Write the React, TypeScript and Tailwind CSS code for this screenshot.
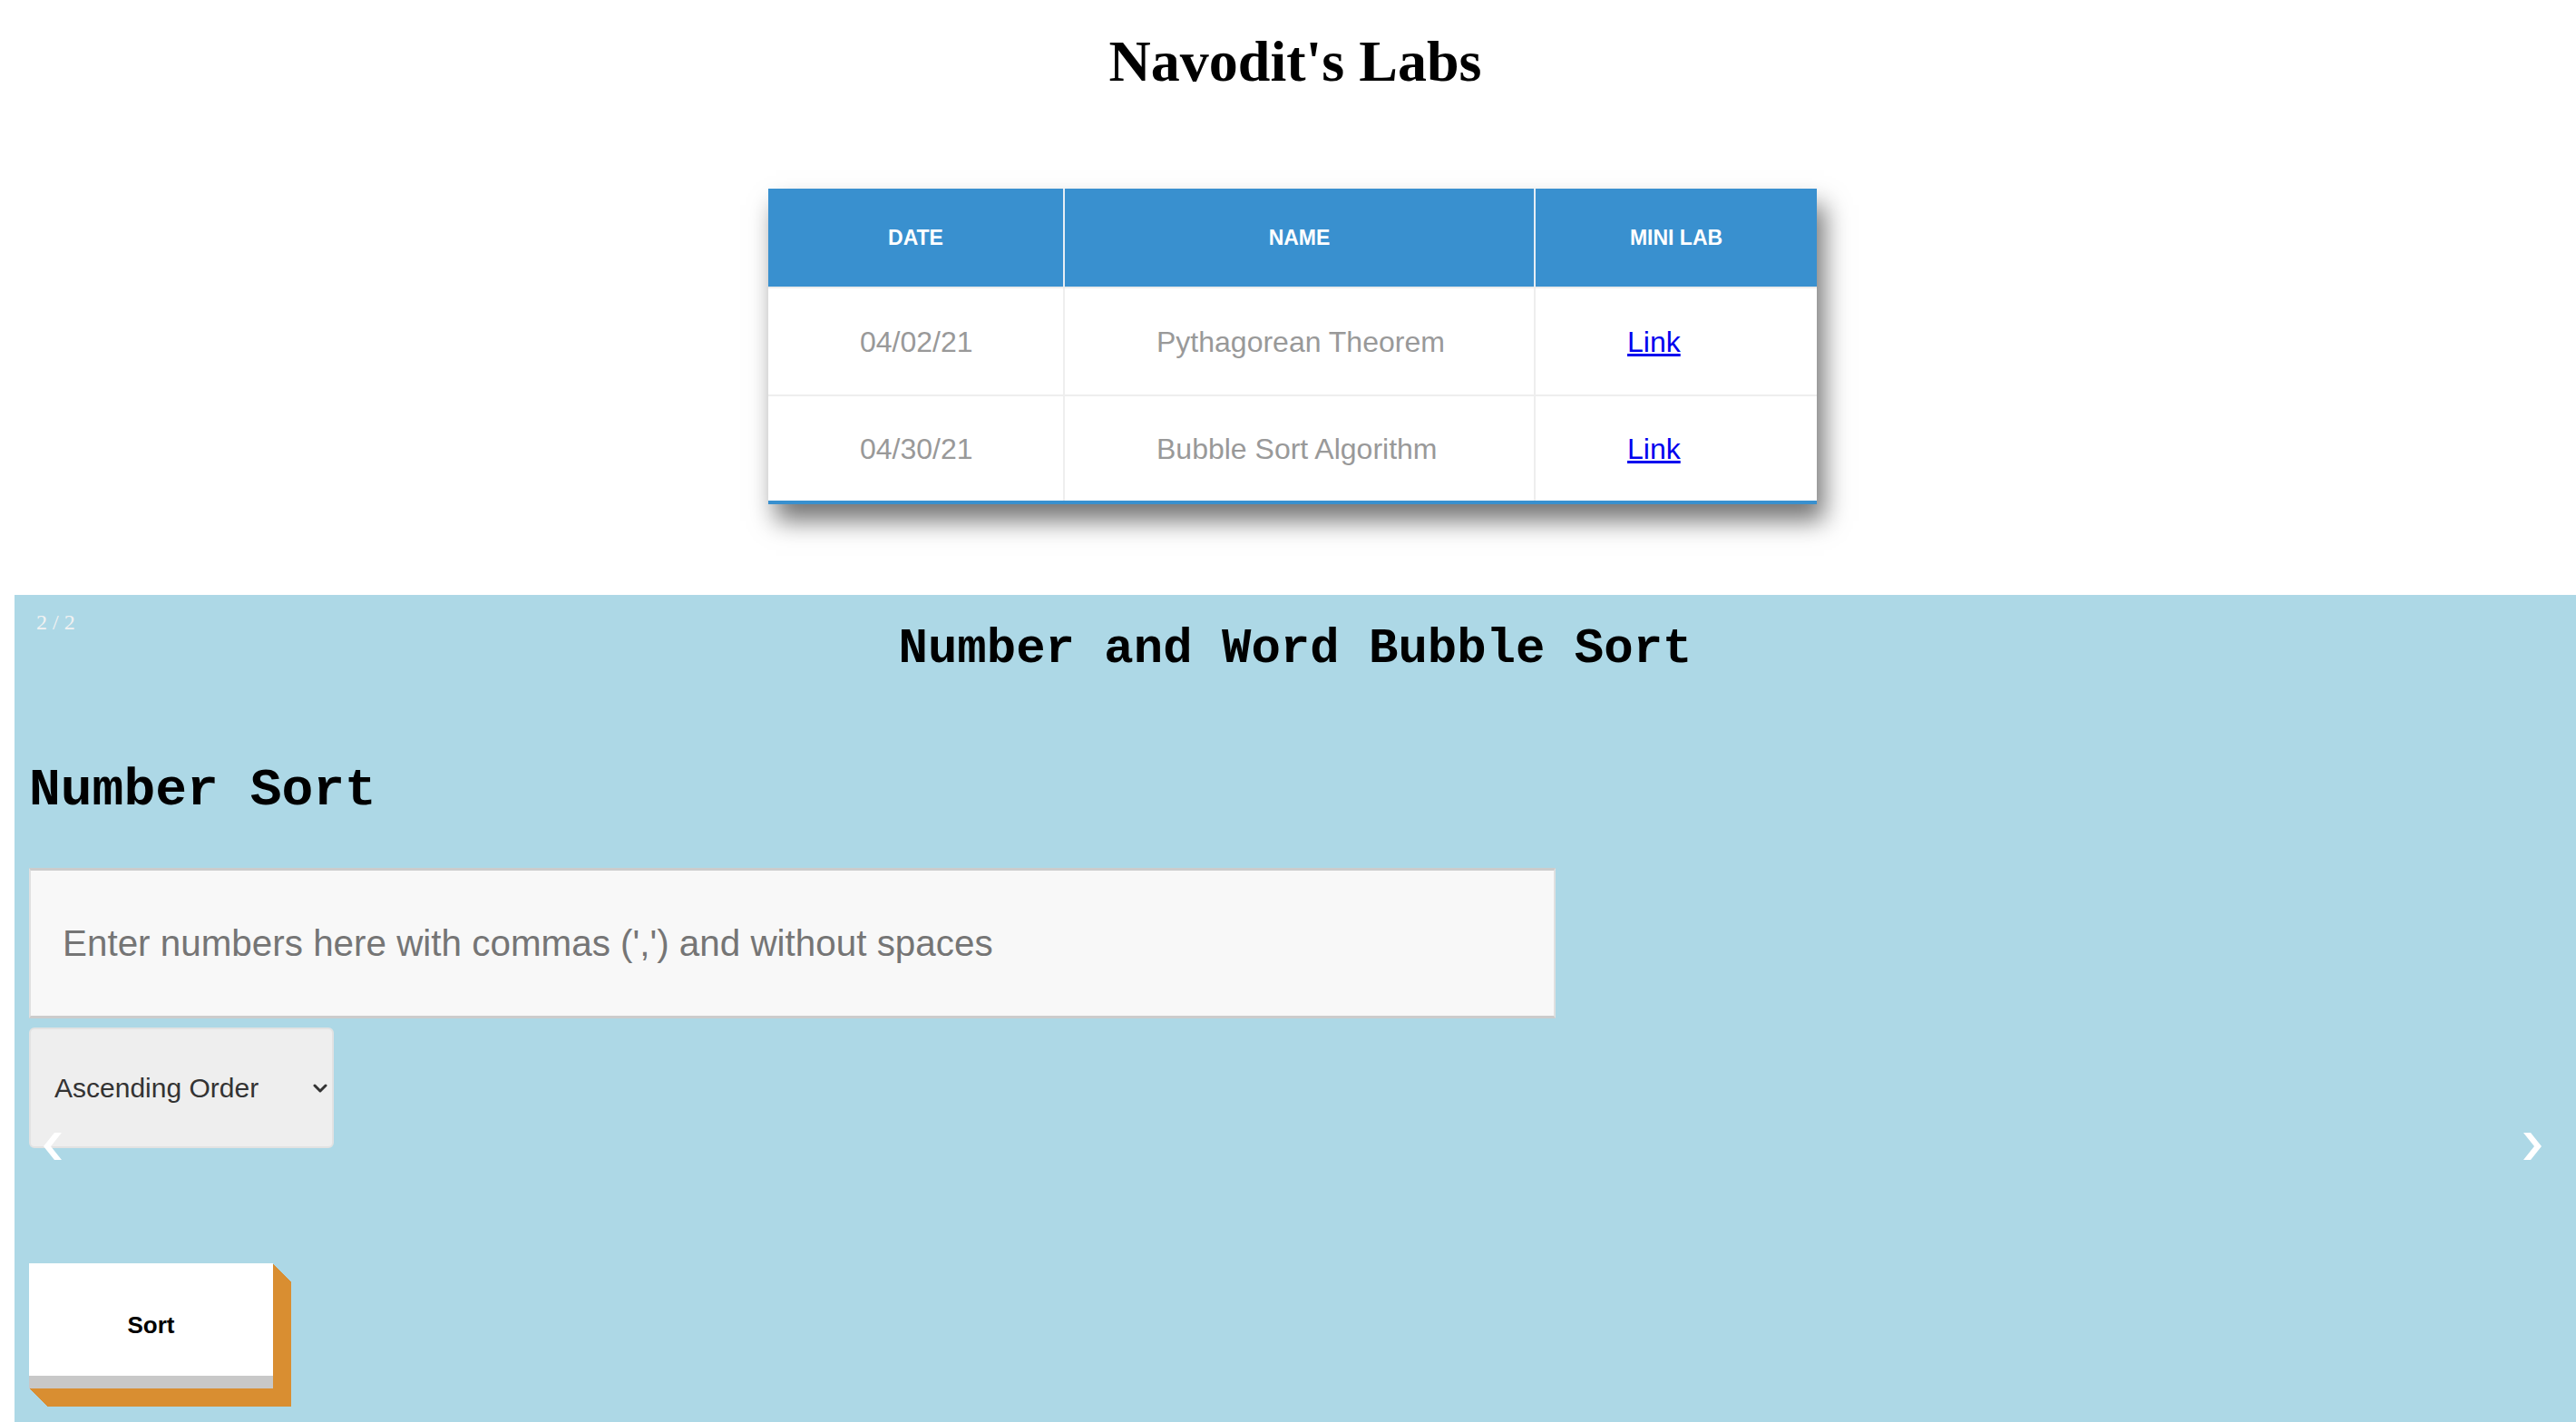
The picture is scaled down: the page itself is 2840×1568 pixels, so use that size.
import React from "react";

const cols = "grid grid-cols-[327px_519px_310px]";

const rows = [
  { date: "04/02/21", name: "Pythagorean Theorem" },
  { date: "04/30/21", name: "Bubble Sort Algorithm" },
];

function Chevron({ dir }: { dir: "left" | "right" }) {
  return (
    <svg width="20" height="30" viewBox="0 0 20 30" className="block">
      {dir === "right" ? (
        <polygon points="0,0 8,0 20,15 8,30 0,30 12,15" fill="#ffffff" />
      ) : (
        <polygon points="20,0 12,0 0,15 12,30 20,30 8,15" fill="#ffffff" />
      )}
    </svg>
  );
}

export default function App() {
  return (
    <div className="w-full bg-white pl-[16px] font-['Liberation_Sans',Arial,sans-serif]">
      <h1 className="pt-[32px] text-center font-['Liberation_Serif','Times_New_Roman',serif] text-[64px] font-bold leading-[72px] text-black">
        Navodit's Labs
      </h1>

      <div className="mt-[104px] flex justify-center pr-[6px]">
        <div className="w-[1156px] border-b-4 border-b-[#3990cf] bg-white shadow-[8px_18px_26px_rgba(0,0,0,0.55)]">
          <div className={`${cols} h-[110px] border-b-2 border-b-[#ececec] bg-[#3990cf]`}>
            <div className="flex items-center justify-center border-r-2 border-r-[#e6edf4] text-[23px] font-bold text-white">
              DATE
            </div>
            <div className="flex items-center justify-center border-r-2 border-r-[#e6edf4] text-[23px] font-bold text-white">
              NAME
            </div>
            <div className="flex items-center justify-center text-[23px] font-bold text-white">
              MINI LAB
            </div>
          </div>
          {rows.map((r, i) => (
            <div
              key={r.date}
              className={`${cols} ${i === 0 ? "h-[119px] border-b-2 border-b-[#eeeeee]" : "h-[115px]"}`}
            >
              <div className="flex items-center border-r-2 border-r-[#eeeeee] pl-[101px] text-[32px] text-[#999999]">
                {r.date}
              </div>
              <div className="flex items-center border-r-2 border-r-[#eeeeee] pl-[101px] text-[32px] text-[#999999]">
                {r.name}
              </div>
              <div className="flex items-center pl-[101px] text-[32px]">
                <a href="#" className="text-[#0000ee] underline">
                  Link
                </a>
              </div>
            </div>
          ))}
        </div>
      </div>

      <section className="relative mt-[100px] h-[912px] bg-[#add8e6] px-[16px] pt-[29px]">
        <div className="absolute left-[24px] top-[16px] font-['Liberation_Serif','Times_New_Roman',serif] text-[24px] leading-[28px] text-[#f2f2f2]">
          2 / 2
        </div>

        <h2 className="text-center font-['Liberation_Mono','Courier_New',monospace] text-[54px] font-bold leading-[62px] text-black">
          Number and Word Bubble Sort
        </h2>

        <h3 className="mt-[92px] font-['Liberation_Mono','Courier_New',monospace] text-[58px] font-bold leading-[66px] text-black">
          Number Sort
        </h3>

        <input
          type="text"
          placeholder="Enter numbers here with commas (',') and without spaces"
          className="mt-[52px] block h-[166px] w-[1683px] border-x-2 border-y-[3px] border-x-[#e0e0e0] border-y-[#cccccc] bg-[#f8f8f8] pl-[35px] text-[40.4px] text-[#333333] outline-none placeholder:text-[#757575]"
        />

        <div className="relative mt-[10px] h-[133px] w-[336px]">
          <select
            defaultValue="asc"
            className="h-[133px] w-[336px] appearance-none rounded-[6px] border-2 border-[#e2e2e2] bg-[#eeeeee] pl-[26px] text-[30px] text-[#333333] outline-none"
          >
            <option value="asc">Ascending Order</option>
            <option value="desc">Descending Order</option>
          </select>
          <svg
            width="16"
            height="10"
            viewBox="0 0 16 10"
            className="pointer-events-none absolute left-[313px] top-[62px]"
          >
            <path d="M2 2 L8 8 L14 2" fill="none" stroke="#333333" strokeWidth="3" strokeLinecap="round" strokeLinejoin="round" />
          </svg>
        </div>

        <button className="mt-[127px] block h-[138px] w-[269px] border-b-[14px] border-b-[#c8c8c8] bg-white pt-[12px] text-[26px] font-bold text-black shadow-[1px_1px_0_#d98e31,2px_2px_0_#d98e31,3px_3px_0_#d98e31,4px_4px_0_#d98e31,5px_5px_0_#d98e31,6px_6px_0_#d98e31,7px_7px_0_#d98e31,8px_8px_0_#d98e31,9px_9px_0_#d98e31,10px_10px_0_#d98e31,11px_11px_0_#d98e31,12px_12px_0_#d98e31,13px_13px_0_#d98e31,14px_14px_0_#d98e31,15px_15px_0_#d98e31,16px_16px_0_#d98e31,17px_17px_0_#d98e31,18px_18px_0_#d98e31,19px_19px_0_#d98e31,20px_20px_0_#d98e31]">
          Sort
        </button>

        <a href="#" className="absolute left-[32px] top-[593px]" aria-label="Previous">
          <Chevron dir="left" />
        </a>
        <a href="#" className="absolute right-[38px] top-[593px]" aria-label="Next">
          <Chevron dir="right" />
        </a>
      </section>
    </div>
  );
}
